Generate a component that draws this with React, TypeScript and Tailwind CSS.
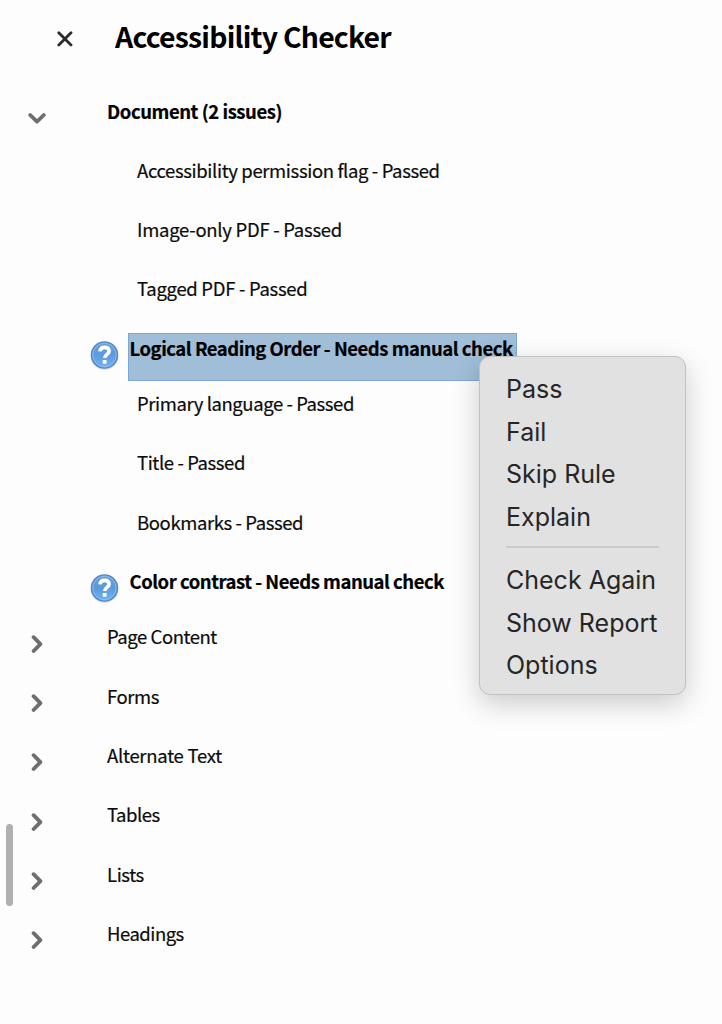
import React from 'react';
import { clsx } from 'clsx';

type Check = { label: string; issue?: boolean; selected?: boolean; tracking: string };

const CHECKS: Check[] = [
  { label: 'Accessibility permission flag - Passed', tracking: 'tracking-[-0.37px]' },
  { label: 'Image-only PDF - Passed', tracking: 'tracking-[-0.27px]' },
  { label: 'Tagged PDF - Passed', tracking: 'tracking-[-0.3px]' },
  { label: 'Logical Reading Order - Needs manual check', issue: true, selected: true, tracking: 'tracking-[-0.47px]' },
  { label: 'Primary language - Passed', tracking: 'tracking-[-0.42px]' },
  { label: 'Title - Passed', tracking: 'tracking-[-0.4px]' },
  { label: 'Bookmarks - Passed', tracking: 'tracking-[-0.4px]' },
  { label: 'Color contrast - Needs manual check', issue: true, tracking: 'tracking-[-0.48px]' },
];

const CATEGORIES = [
  { name: 'Page Content', tracking: 'tracking-[-0.45px]' },
  { name: 'Forms', tracking: 'tracking-[-0.4px]' },
  { name: 'Alternate Text', tracking: 'tracking-[-0.27px]' },
  { name: 'Tables', tracking: 'tracking-[-0.5px]' },
  { name: 'Lists', tracking: 'tracking-[-0.4px]' },
  { name: 'Headings', tracking: 'tracking-[-0.5px]' },
];

const MENU_GROUPS = [
  ['Pass', 'Fail', 'Skip Rule', 'Explain'],
  ['Check Again', 'Show Report', 'Options'],
];

export default function App() {
  return (
    <div className="relative h-[1024px] w-[722px] overflow-hidden bg-[#fdfdfd] font-['Noto_Sans_CJK_SC',sans-serif] text-[18.5px] leading-6 text-[#0c0c0c]">
      {/* Header */}
      <header className="flex h-[98.8px] items-start pt-4 pl-[57px]">
        <button className="mt-[15px] w-[58px]" aria-label="Close">
          <svg width="16" height="16" viewBox="0 0 16 16" fill="none" stroke="#2c2c2c" strokeWidth="2.8" strokeLinecap="round">
            <path d="M1.8 1.8 14 14M14 1.8 1.8 14" />
          </svg>
        </button>
        <h1 className="text-[28.4px] leading-10 font-bold tracking-[-0.78px] text-black">Accessibility Checker</h1>
      </header>

      {/* Results tree */}
      <main className="[-webkit-text-stroke:0.2px]">
        <div className="flex h-[59.2px] items-start pl-7">
          <Chevron open />
          <h2 className="font-bold tracking-[-0.45px] text-black">Document (2 issues)</h2>
        </div>
        {CHECKS.map((check) => (
          <CheckRow key={check.label} {...check} />
        ))}
        {CATEGORIES.map(({ name, tracking }) => (
          <div key={name} className="flex h-[59.35px] items-start pl-7">
            <Chevron />
            <span className={tracking}>{name}</span>
          </div>
        ))}
      </main>

      <div className="absolute top-[824px] left-[5.5px] h-[82px] w-[7.5px] rounded-full bg-[#b0b0b0]" />

      <ContextMenu />
    </div>
  );
}

function CheckRow({ label, issue, selected, tracking }: Check) {
  if (!issue) {
    return <div className={clsx('h-[59.2px] pl-[137px]', tracking)}>{label}</div>;
  }

  return (
    <div className="flex h-[55.6px] items-start pl-[90px]">
      <HelpIcon />
      <div
        className={clsx(
          '-mt-[2.2px] ml-[7.5px] h-[48px] border pt-[1.4px] pl-px font-bold whitespace-nowrap text-black',
          selected ? 'w-[389px] border-[#7da7d9] bg-[#a0bed8]' : 'border-transparent',
          tracking
        )}
      >
        {label}
      </div>
    </div>
  );
}

function ContextMenu() {
  return (
    <div className="absolute top-[356px] left-[479px] h-[339px] w-[207px] rounded-[11px] border border-[#c2c2c2] bg-[#e1e1e1] px-[26px] pt-[11px] font-['Inter',sans-serif] text-[25px] text-[#262626] shadow-[0_9px_28px_rgba(0,0,0,0.2)]">
      {MENU_GROUPS.map((group, idx) => (
        <div key={group[0]} className={idx > 0 ? 'mt-[8px] border-t-2 border-[#cbcbcb] pt-[11px]' : undefined}>
          {group.map((item) => (
            <div key={item} className="h-[42.5px] leading-[42.5px] whitespace-nowrap">
              {item}
            </div>
          ))}
        </div>
      ))}
    </div>
  );
}

function Chevron({ open = false }: { open?: boolean }) {
  return (
    <svg className="mt-[10.4px] mr-[61px] shrink-0" width="18" height="18" viewBox="0 0 18 18" fill="none" stroke="#6e6e6e" strokeWidth="3.8" strokeLinecap="round" strokeLinejoin="round">
      <path d={open ? 'M2.2 6 9 12.6 15.8 6' : 'M5.6 2.2 12.4 9.1 5.6 16'} />
    </svg>
  );
}

function HelpIcon() {
  return (
    <svg className="mt-[4px] shrink-0" width="30" height="32" viewBox="0 0 30 32">
      <defs>
        <linearGradient id="help" x1="0" y1="0" x2="0" y2="1">
          <stop offset="0" stopColor="#6d9fd5" />
          <stop offset="0.5" stopColor="#5b9ade" />
          <stop offset="1" stopColor="#72b5f2" />
        </linearGradient>
      </defs>
      <ellipse cx="14.5" cy="17.5" rx="13.5" ry="12.5" fill="#000" opacity="0.12" />
      <circle cx="14.5" cy="15" r="13.1" fill="url(#help)" stroke="#5686c4" strokeWidth="1.4" />
      <circle cx="14.5" cy="15" r="11.7" fill="none" stroke="#9cc4ee" strokeWidth="1" opacity="0.7" />
      <path d="M10 11.4C10.2 8.6 12 7.4 14.6 7.4c2.8 0 4.5 1.5 4.5 3.8 0 3.2-4.4 3.3-4.4 6.8" fill="none" stroke="#fff" strokeWidth="3.6" />
      <rect x="12.7" y="20" width="3.9" height="3.7" rx="0.6" fill="#fff" />
    </svg>
  );
}
